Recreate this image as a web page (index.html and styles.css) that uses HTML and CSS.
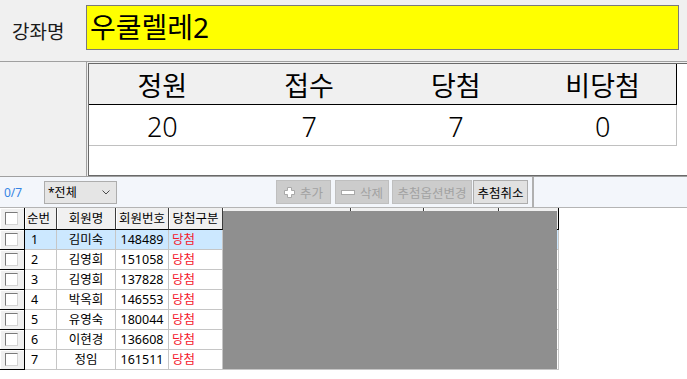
FILE: index.html
```html
<!DOCTYPE html>
<html>
<head>
    <meta charset="utf-8">
    <title>추첨 관리</title>
    <link rel="stylesheet" href="styles.css">
</head>
<body>
<div class="course-bar">
    <div class="course-label">강좌명</div>
    <div class="course-name">우쿨렐레2</div>
</div>
<div class="summary">
    <div class="summary-side"></div>
    <div class="summary-box">
        <div class="stat-row stat-head">
            <div class="stat-cell">정원</div>
            <div class="stat-cell">접수</div>
            <div class="stat-cell">당첨</div>
            <div class="stat-cell">비당첨</div>
        </div>
        <div class="stat-row stat-body">
            <div class="stat-cell">20</div>
            <div class="stat-cell">7</div>
            <div class="stat-cell">7</div>
            <div class="stat-cell">0</div>
        </div>
    </div>
</div>
<div class="tool-bar">
    <div class="count">0/7</div>
    <div class="filter">
        <span>*전체</span>
        <svg width="8" height="5" viewBox="0 0 8 5"><polyline points="0.5,0.5 4,4 7.5,0.5" fill="none" stroke="#4a4a4a" stroke-width="1"/></svg>
    </div>
    <div class="button-group">
        <div class="tool-button btn-add">
            <svg width="11" height="11" viewBox="0 0 11 11"><path d="M3.5 0.5h4v3h3v4h-3v3h-4v-3h-3v-4h3z" fill="#fff" stroke="#a9a9a9"/></svg>
            추가
        </div>
        <div class="tool-button btn-del">
            <svg width="14" height="5" viewBox="0 0 14 5"><rect x="0.5" y="0.5" width="13" height="4" fill="#fff" stroke="#a9a9a9"/></svg>
            삭제
        </div>
        <div class="tool-button btn-option">추첨옵션변경</div>
        <div class="tool-button btn-cancel is-active">추첨취소</div>
    </div>
</div>
<div class="grid-wrap">
    <div class="grid">
        <div class="grid-row grid-head">
            <div class="cell cell-check"><span class="check"></span></div>
            <div class="cell cell-no">순번</div>
            <div class="cell cell-name">회원명</div>
            <div class="cell cell-id">회원번호</div>
            <div class="cell cell-result">당첨구분</div>
            <div class="cell"></div>
            <div class="cell"></div>
            <div class="cell"></div>
            <div class="cell cell-last"></div>
        </div>
        <div class="grid-row is-selected">
            <div class="cell cell-check"><span class="check"></span></div>
            <div class="cell cell-no">1</div>
            <div class="cell cell-name">김미숙</div>
            <div class="cell cell-id">148489</div>
            <div class="cell cell-result">당첨</div>
            <div class="cell"></div><div class="cell"></div><div class="cell"></div><div class="cell"></div>
        </div>
        <div class="grid-row">
            <div class="cell cell-check"><span class="check"></span></div>
            <div class="cell cell-no">2</div>
            <div class="cell cell-name">김영희</div>
            <div class="cell cell-id">151058</div>
            <div class="cell cell-result">당첨</div>
            <div class="cell"></div><div class="cell"></div><div class="cell"></div><div class="cell"></div>
        </div>
        <div class="grid-row">
            <div class="cell cell-check"><span class="check"></span></div>
            <div class="cell cell-no">3</div>
            <div class="cell cell-name">김영희</div>
            <div class="cell cell-id">137828</div>
            <div class="cell cell-result">당첨</div>
            <div class="cell"></div><div class="cell"></div><div class="cell"></div><div class="cell"></div>
        </div>
        <div class="grid-row">
            <div class="cell cell-check"><span class="check"></span></div>
            <div class="cell cell-no">4</div>
            <div class="cell cell-name">박옥희</div>
            <div class="cell cell-id">146553</div>
            <div class="cell cell-result">당첨</div>
            <div class="cell"></div><div class="cell"></div><div class="cell"></div><div class="cell"></div>
        </div>
        <div class="grid-row">
            <div class="cell cell-check"><span class="check"></span></div>
            <div class="cell cell-no">5</div>
            <div class="cell cell-name">유영숙</div>
            <div class="cell cell-id">180044</div>
            <div class="cell cell-result">당첨</div>
            <div class="cell"></div><div class="cell"></div><div class="cell"></div><div class="cell"></div>
        </div>
        <div class="grid-row">
            <div class="cell cell-check"><span class="check"></span></div>
            <div class="cell cell-no">6</div>
            <div class="cell cell-name">이현경</div>
            <div class="cell cell-id">136608</div>
            <div class="cell cell-result">당첨</div>
            <div class="cell"></div><div class="cell"></div><div class="cell"></div><div class="cell"></div>
        </div>
        <div class="grid-row">
            <div class="cell cell-check"><span class="check"></span></div>
            <div class="cell cell-no">7</div>
            <div class="cell cell-name">정임</div>
            <div class="cell cell-id">161511</div>
            <div class="cell cell-result">당첨</div>
            <div class="cell"></div><div class="cell"></div><div class="cell"></div><div class="cell"></div>
        </div>
    </div>
    <div class="redact"></div>
</div>
</body>
</html>
```

FILE: styles.css
```css
body {
    margin: 0;
    background: #fff;
    color: #000;
    font-family: "Noto Sans", "Noto Sans CJK KR", sans-serif;
}

.course-bar {
    display: flex;
    align-items: flex-start;
    height: 61px;
    padding-right: 8px;
    background: #f0f0f0;
    box-sizing: border-box;
}

.course-label {
    align-self: center;
    width: 86px;
    padding-left: 12px;
    box-sizing: border-box;
    font-size: 19px;
    color: #1a1a1a;
}

.course-name {
    flex: 1;
    height: 45px;
    margin-top: 5px;
    padding-left: 3px;
    box-sizing: border-box;
    border: 1px solid #7a7a7a;
    background: #ff0;
    font-size: 28px;
    line-height: 42px;
}

.summary {
    display: flex;
    height: 115px;
    box-sizing: border-box;
    border-top: 1px solid #a0a0a0;
    background: #f0f0f0;
}

.summary-side {
    width: 87px;
    box-sizing: border-box;
    border-right: 1px solid #a0a0a0;
}

.summary-box {
    flex: 1;
    margin: 1px 0 0 1px;
    border: 1px solid #696969;
    border-right: none;
    background: #fff;
}

.stat-row {
    display: grid;
    grid-template-columns: repeat(4, 1fr);
    width: 588px;
    height: 41px;
    box-sizing: border-box;
}

.stat-head {
    background: #f0f0f0;
    border-right: 1px solid #000;
    border-bottom: 1px solid #000;
}

.stat-body {
    border-right: 1px solid #c0c0c0;
    border-bottom: 1px solid #c0c0c0;
}

.stat-cell {
    text-align: center;
    font-size: 27px;
    line-height: 44px;
}

.stat-body .stat-cell {
    font-weight: 300;
}

.tool-bar {
    display: flex;
    align-items: center;
    height: 32px;
    box-sizing: border-box;
    border-top: 1px solid #a0a0a0;
    border-bottom: 1px solid #b4b4b4;
    background: #f3f6fb;
    font-size: 12px;
}

.count {
    width: 44px;
    padding-left: 4px;
    box-sizing: border-box;
    color: #3584e4;
}

.filter {
    display: flex;
    align-items: center;
    justify-content: space-between;
    width: 73px;
    height: 23px;
    padding: 0 6px 0 3px;
    box-sizing: border-box;
    border: 1px solid #adadad;
    background: #e5e5e5;
}

.button-group {
    align-self: stretch;
    display: flex;
    align-items: center;
    width: 262px;
    margin-left: 155px;
    padding-left: 4px;
    box-sizing: border-box;
    border-right: 2px solid #b0b0b0;
}

.tool-button {
    display: flex;
    align-items: center;
    justify-content: center;
    gap: 5px;
    height: 24px;
    box-sizing: border-box;
    border: 1px solid #bfbfbf;
    background: #ccc;
    color: #a2a2a2;
    font-size: 12.5px;
}

.tool-button.is-active {
    border-color: #adadad;
    background: #e1e1e1;
    color: #000;
}

.btn-add {
    width: 55px;
    margin-right: 4px;
}

.btn-del {
    width: 54px;
    margin-right: 3px;
}

.btn-option {
    width: 80px;
    margin-right: 1px;
}

.btn-cancel {
    width: 55px;
}

.grid-wrap {
    position: relative;
}

.grid {
    width: 559px;
}

.grid-row {
    display: grid;
    grid-template-columns: 25px 32px 59px 53px 54px 128px 73px 75px 60px;
    height: 20px;
}

.grid-head {
    height: 22px;
}

.cell {
    box-sizing: border-box;
    border-right: 1px solid #c6c6c6;
    border-bottom: 1px solid #c6c6c6;
    font-size: 12.5px;
    line-height: 19px;
    white-space: nowrap;
    overflow: hidden;
}

.grid-head .cell {
    background: #f0f0f0;
    border-right-color: #3c3c3c;
    border-bottom-color: #000;
    box-shadow: inset 1px 0 #fff;
    line-height: 21px;
    text-align: center;
}

.grid-head .cell-last {
    border-right-color: #000;
}

.is-selected .cell {
    background: #cce8ff;
}

.grid-row .cell-check {
    display: flex;
    align-items: center;
    padding-left: 5px;
    background: #f0f0f0;
    border-right-color: #000;
    border-bottom-color: #000;
    box-shadow: inset 1px 1px #fff;
}

.check {
    width: 13px;
    height: 13px;
    box-sizing: border-box;
    border: 1px solid;
    border-color: #7a7a7a #d4d4d4 #d4d4d4 #7a7a7a;
    background: #fff;
}

.cell-no {
    padding-left: 6px;
}

.grid-head .cell-no {
    padding-left: 2px;
    text-align: left;
}

.cell-name,
.cell-id {
    text-align: center;
}

.cell-result {
    padding-left: 3px;
    color: #f4172c;
}

.grid-head .cell-result {
    padding-left: 0;
    color: #000;
}

.redact {
    position: absolute;
    left: 223px;
    top: 3px;
    width: 334px;
    height: 158px;
    background: #8f8f8f;
}
```
